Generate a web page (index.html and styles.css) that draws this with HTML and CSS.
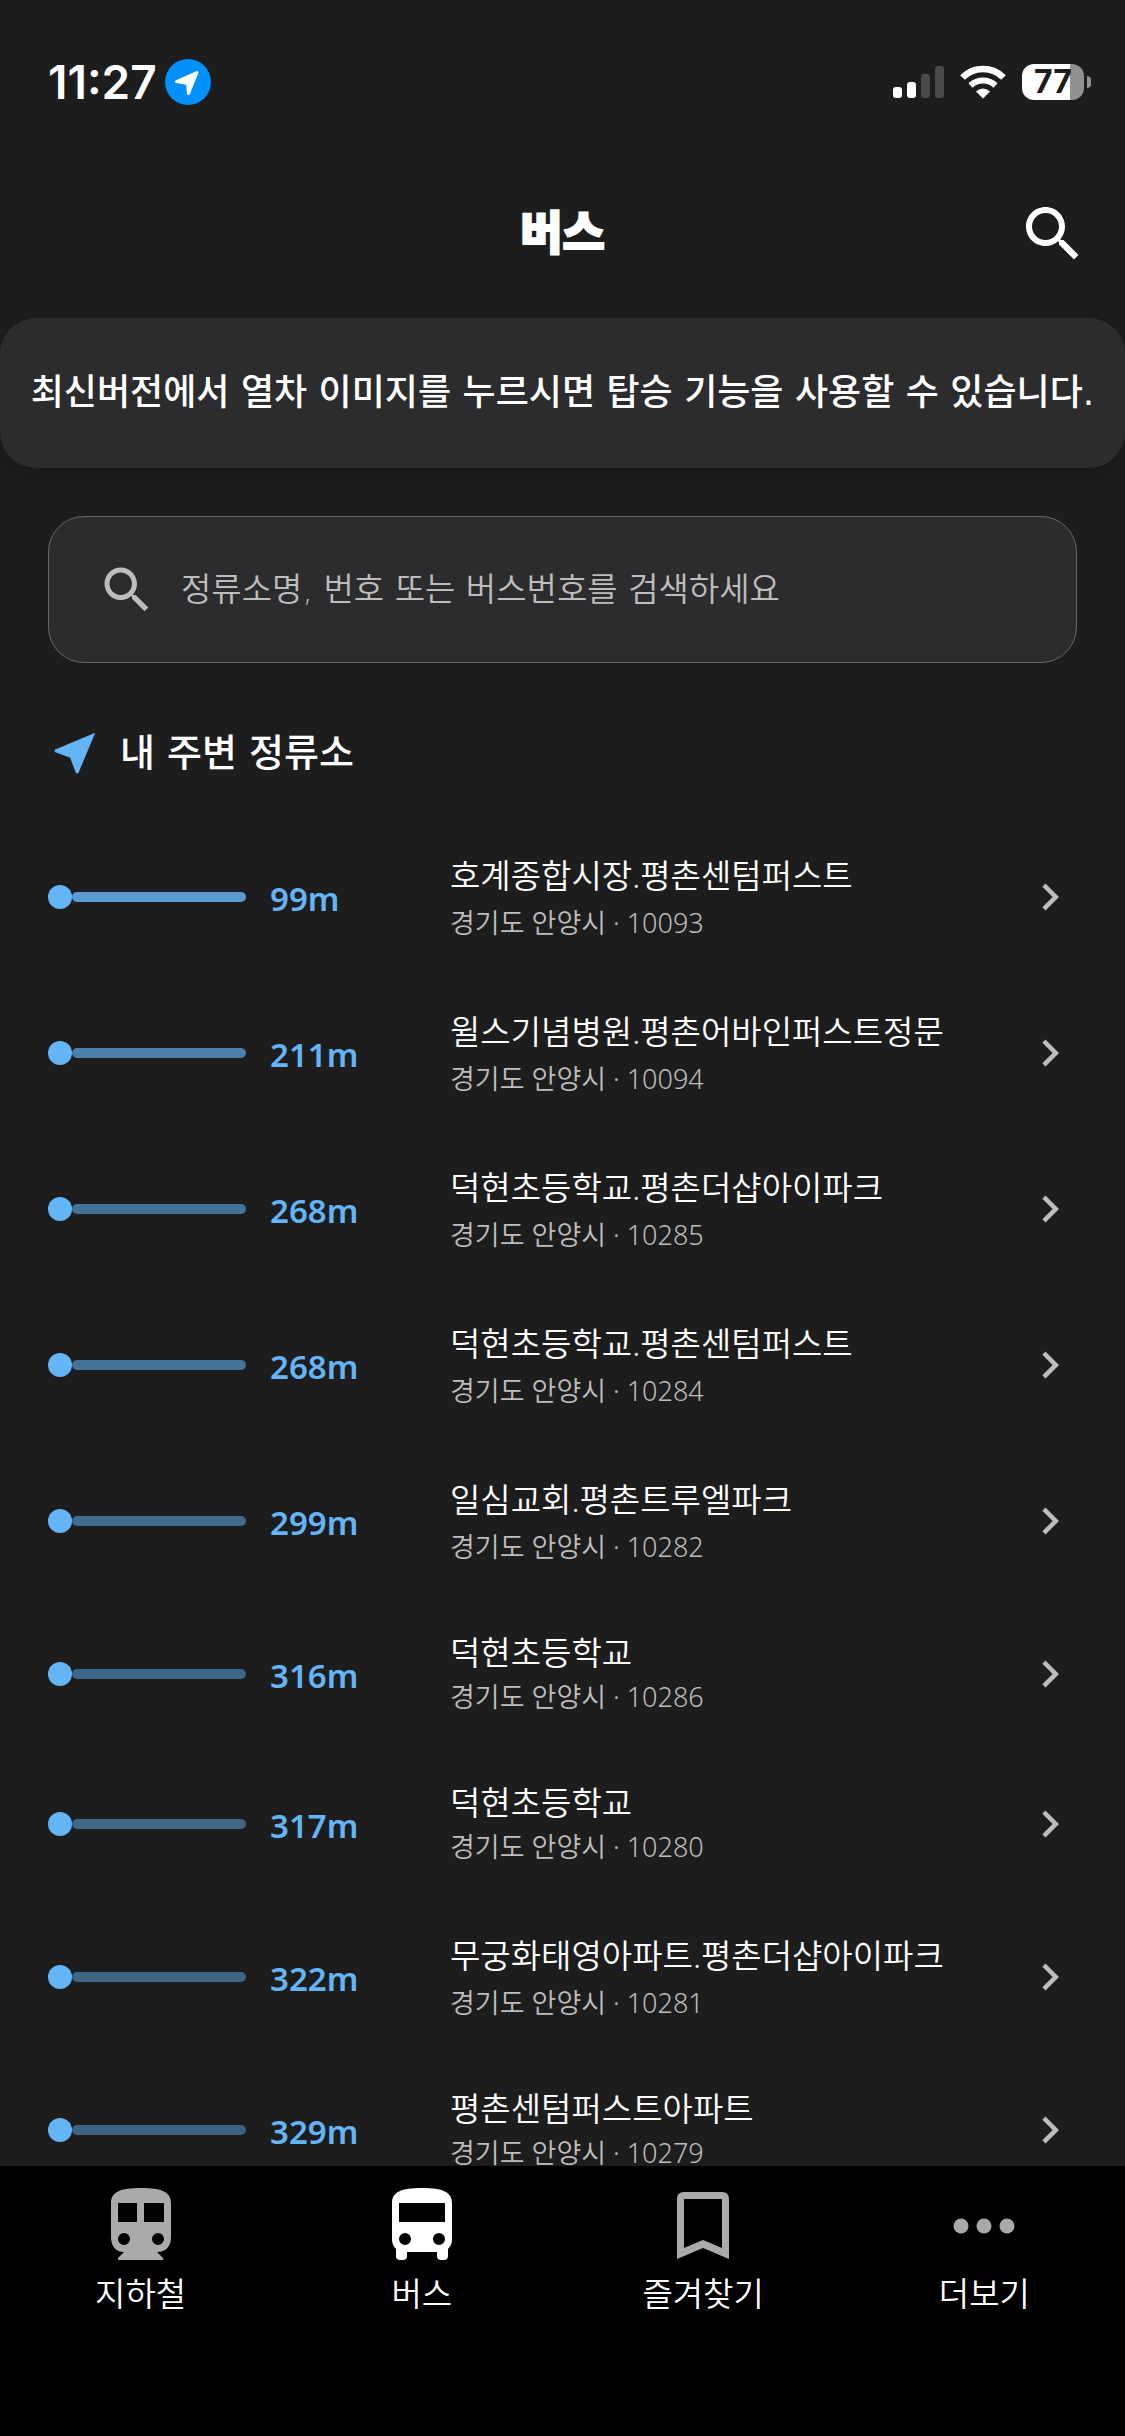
FILE: index.html
```html
<!DOCTYPE html>
<html lang="ko">
<head>
    <meta charset="UTF-8">
    <meta name="viewport" content="width=device-width, initial-scale=1.0">
    <title>버스</title>
    <link rel="stylesheet" href="styles.css">
</head>
<body>
    <!-- Status bar -->
    <div class="status-bar">
        <div class="status-left">
            <span class="clock">11:27</span>
            <svg class="location" viewBox="0 0 46 46">
                <circle cx="23" cy="23" r="23" fill="#0091ff"/>
                <path d="M11.500 22.500L32 13.500L23.500 34.500L22.500 24.500Z" fill="#fff" stroke="#fff" stroke-width="3" stroke-linejoin="round"/>
            </svg>
        </div>
        <div class="status-right">
            <svg class="signal" viewBox="0 0 51 32">
                <rect x="0" y="21" width="9" height="11" rx="3" fill="#fff"/>
                <rect x="14" y="16" width="9" height="16" rx="3" fill="#fff"/>
                <rect x="28" y="8" width="9" height="24" rx="3" fill="#4a4a4b"/>
                <rect x="42" y="0" width="9" height="32" rx="3" fill="#4a4a4b"/>
            </svg>
            <svg class="wifi" viewBox="0 0 46 34">
                <path d="M2.500 12.500A29 29 0 0 1 43.500 12.500" fill="none" stroke="#fff" stroke-width="6.500"/>
                <path d="M10.500 20.500A18 18 0 0 1 35.500 20.500" fill="none" stroke="#fff" stroke-width="6"/>
                <path d="M16 26.500Q23 20.500 30 26.500L23 33.500Z" fill="#fff"/>
            </svg>
            <div class="battery"><span class="battery-level">77</span></div>
            <div class="battery-cap"></div>
        </div>
    </div>

    <!-- Title bar -->
    <header class="app-bar">
        <h1>버스</h1>
        <button class="icon-btn" type="button" aria-label="검색">
            <svg viewBox="0 0 24 24"><path d="M15.500 14h-.79l-.28-.27C15.410 12.590 16 11.110 16 9.500 16 5.910 13.090 3 9.500 3S3 5.910 3 9.500 5.910 16 9.500 16c1.610 0 3.090-.59 4.230-1.570l.27.28v.79l5 4.990L20.490 19l-4.990-5zm-6 0C7.010 14 5 11.990 5 9.500S7.010 5 9.500 5 14 7.010 14 9.500 11.990 14 9.500 14z"/></svg>
        </button>
    </header>

    <div class="notice">최신버전에서 열차 이미지를 누르시면 탑승 기능을 사용할 수 있습니다.</div>

    <main>
        <label class="search">
            <svg viewBox="0 0 24 24"><path d="M15.500 14h-.79l-.28-.27C15.410 12.590 16 11.110 16 9.500 16 5.910 13.090 3 9.500 3S3 5.910 3 9.500 5.910 16 9.500 16c1.610 0 3.090-.59 4.230-1.570l.27.28v.79l5 4.990L20.490 19l-4.990-5zm-6 0C7.010 14 5 11.990 5 9.500S7.010 5 9.500 5 14 7.010 14 9.500 11.990 14 9.500 14z"/></svg>
            <input type="text" placeholder="정류소명, 번호 또는 버스번호를 검색하세요" aria-label="정류소 검색">
        </label>

        <h2>
            <svg viewBox="0 0 24 24"><path d="M21 3L3 10.530v.98l6.840 2.650L12.480 21h.98L21 3z"/></svg>
            내 주변 정류소
        </h2>

        <!-- Nearby stops -->
        <ul class="stops">
            <li><a class="stop" href="#10093">
                <span class="line" style="opacity: 0.83"></span>
                <span class="distance">99m</span>
                <span class="info"><span class="name split">호계종합시장.평촌센텀퍼스트</span><span class="area">경기도 안양시 · 10093</span></span>
                <svg class="chevron" viewBox="0 0 24 24"><path d="M10 6L8.590 7.410 13.170 12l-4.580 4.590L10 18l6-6z"/></svg>
            </a></li>
            <li><a class="stop" href="#10094">
                <span class="line" style="opacity: 0.65"></span>
                <span class="distance">211m</span>
                <span class="info"><span class="name split">윌스기념병원.평촌어바인퍼스트정문</span><span class="area">경기도 안양시 · 10094</span></span>
                <svg class="chevron" viewBox="0 0 24 24"><path d="M10 6L8.590 7.410 13.170 12l-4.580 4.590L10 18l6-6z"/></svg>
            </a></li>
            <li><a class="stop" href="#10285">
                <span class="line" style="opacity: 0.56"></span>
                <span class="distance">268m</span>
                <span class="info"><span class="name split">덕현초등학교.평촌더샵아이파크</span><span class="area">경기도 안양시 · 10285</span></span>
                <svg class="chevron" viewBox="0 0 24 24"><path d="M10 6L8.590 7.410 13.170 12l-4.580 4.590L10 18l6-6z"/></svg>
            </a></li>
            <li><a class="stop" href="#10284">
                <span class="line" style="opacity: 0.56"></span>
                <span class="distance">268m</span>
                <span class="info"><span class="name split">덕현초등학교.평촌센텀퍼스트</span><span class="area">경기도 안양시 · 10284</span></span>
                <svg class="chevron" viewBox="0 0 24 24"><path d="M10 6L8.590 7.410 13.170 12l-4.580 4.590L10 18l6-6z"/></svg>
            </a></li>
            <li><a class="stop" href="#10282">
                <span class="line" style="opacity: 0.51"></span>
                <span class="distance">299m</span>
                <span class="info"><span class="name split">일심교회.평촌트루엘파크</span><span class="area">경기도 안양시 · 10282</span></span>
                <svg class="chevron" viewBox="0 0 24 24"><path d="M10 6L8.590 7.410 13.170 12l-4.580 4.590L10 18l6-6z"/></svg>
            </a></li>
            <li><a class="stop" href="#10286">
                <span class="line" style="opacity: 0.48"></span>
                <span class="distance">316m</span>
                <span class="info"><span class="name">덕현초등학교</span><span class="area">경기도 안양시 · 10286</span></span>
                <svg class="chevron" viewBox="0 0 24 24"><path d="M10 6L8.590 7.410 13.170 12l-4.580 4.590L10 18l6-6z"/></svg>
            </a></li>
            <li><a class="stop" href="#10280">
                <span class="line" style="opacity: 0.48"></span>
                <span class="distance">317m</span>
                <span class="info"><span class="name">덕현초등학교</span><span class="area">경기도 안양시 · 10280</span></span>
                <svg class="chevron" viewBox="0 0 24 24"><path d="M10 6L8.590 7.410 13.170 12l-4.580 4.590L10 18l6-6z"/></svg>
            </a></li>
            <li><a class="stop" href="#10281">
                <span class="line" style="opacity: 0.47"></span>
                <span class="distance">322m</span>
                <span class="info"><span class="name split">무궁화태영아파트.평촌더샵아이파크</span><span class="area">경기도 안양시 · 10281</span></span>
                <svg class="chevron" viewBox="0 0 24 24"><path d="M10 6L8.590 7.410 13.170 12l-4.580 4.590L10 18l6-6z"/></svg>
            </a></li>
            <li><a class="stop" href="#10279">
                <span class="line" style="opacity: 0.46"></span>
                <span class="distance">329m</span>
                <span class="info"><span class="name">평촌센텀퍼스트아파트</span><span class="area">경기도 안양시 · 10279</span></span>
                <svg class="chevron" viewBox="0 0 24 24"><path d="M10 6L8.590 7.410 13.170 12l-4.580 4.590L10 18l6-6z"/></svg>
            </a></li>
        </ul>
    </main>

    <!-- Bottom tabs -->
    <nav class="tabs">
        <a class="tab" href="#subway">
            <svg viewBox="0 0 72 72"><path fill-rule="evenodd" d="M36 0C15 0 6 4 6 15V49C6 58 11 64 19 64L13 70V72H58V70L52 64C61 64 66 58 66 49V15C66 4 57 0 36 0ZM13 15H32V34H13ZM39 15H59V34H39ZM19 45A6 6 0 1 0 19 57A6 6 0 1 0 19 45ZM53 45A6 6 0 1 0 53 57A6 6 0 1 0 53 45Z"/></svg>
            지하철
        </a>
        <a class="tab active" href="#bus">
            <svg viewBox="0 0 72 72"><path fill-rule="evenodd" d="M36 0C15 0 6 4 6 15V52C6 56 8 59 10 61V68Q10 72 14 72H17Q21 72 21 68V64H51V68Q51 72 55 72H58Q62 72 62 68V61C64 59 66 56 66 52V15C66 4 57 0 36 0ZM13 15H59V34H13ZM19 45A6 6 0 1 0 19 57A6 6 0 1 0 19 45ZM53 45A6 6 0 1 0 53 57A6 6 0 1 0 53 45Z"/></svg>
            버스
        </a>
        <a class="tab" href="#favorites">
            <svg viewBox="0 0 72 72"><path fill-rule="evenodd" d="M17 4H55Q62 4 62 11V71L36 60L10 71V11Q10 4 17 4ZM17 11V60L36 52L55 60V11Z"/></svg>
            즐겨찾기
        </a>
        <a class="tab" href="#more">
            <svg viewBox="0 0 72 72"><circle cx="13" cy="38" r="7.500"/><circle cx="36" cy="38" r="7.500"/><circle cx="59" cy="38" r="7.500"/></svg>
            더보기
        </a>
    </nav>
</body>
</html>
```

FILE: styles.css
```css
* {
    box-sizing: border-box;
}
body {
    margin: 0;
    height: 100vh;
    display: flex;
    flex-direction: column;
    overflow: hidden;
    background: #1d1d1e;
    color: #fff;
    font-family: "Noto Sans", "Noto Sans CJK KR", sans-serif;
}
svg {
    display: block;
    flex-shrink: 0;
    fill: currentColor;
}
a {
    color: inherit;
    text-decoration: none;
}
.status-bar {
    display: flex;
    justify-content: space-between;
    align-items: center;
    height: 164px;
    padding: 0 34px 0 48px;
    font-family: Inter, sans-serif;
    flex-shrink: 0;
}
.status-left, .status-right {
    display: flex;
    align-items: center;
}
.status-left {
    gap: 8px;
}
.clock {
    font-size: 46px;
    font-weight: 600;
}
.location {
    width: 46px;
    height: 46px;
}
.signal {
    width: 51px;
    height: 32px;
}
.wifi {
    width: 46px;
    height: 34px;
    margin: 0 16px;
}
.battery {
    width: 62px;
    height: 36px;
    border-radius: 12px;
    background: linear-gradient(to right, #fff 77%, #929293 77%);
    color: #1d1d1e;
    text-align: center;
}
.battery-level {
    font-size: 32px;
    font-weight: 700;
    line-height: 36px;
}
.battery-cap {
    width: 4px;
    height: 12px;
    margin-left: 3px;
    border-radius: 0 4px 4px 0;
    background: #929293;
}
.app-bar {
    display: grid;
    grid-template-columns: 72px 1fr 72px;
    align-items: center;
    height: 154px;
    padding: 0 36px 14px;
    flex-shrink: 0;
}
.app-bar h1 {
    grid-column: 2;
    margin: 0;
    padding-bottom: 6px;
    font-size: 46px;
    font-weight: 900;
    line-height: 66px;
    text-align: center;
    -webkit-text-stroke: 2px #fff;
}
.icon-btn {
    width: 72px;
    height: 72px;
    padding: 0;
    border: none;
    background: none;
    color: #fff;
    cursor: pointer;
}
.notice {
    flex-shrink: 0;
    padding: 48px 24px;
    border-radius: 36px;
    background: #2c2c2e;
    box-shadow: 0 6px 24px rgba(0, 0, 0, 0.15);
    font-size: 36px;
    font-weight: 500;
    line-height: 54px;
    text-align: center;
    white-space: nowrap;
}
.notice, .search, h2 {
    font-family: "DejaVu Sans", "Noto Sans CJK KR", sans-serif;
}
main {
    flex: 1;
    min-height: 0;
    padding: 48px 48px 0;
    overflow: hidden;
}
.search {
    display: flex;
    align-items: center;
    gap: 24px;
    height: 147px;
    padding: 0 48px;
    border: 1px solid #68686a;
    border-radius: 36px;
    background: #2c2c2e;
    color: #bdbdbd;
}
.search svg {
    width: 60px;
    height: 60px;
}
.search input {
    flex: 1;
    min-width: 0;
    padding: 0;
    border: none;
    outline: none;
    background: none;
    color: #fff;
    font-family: inherit;
    font-size: 33px;
    font-weight: 350;
}
.search input::placeholder {
    color: #bdbdbd;
    opacity: 1;
}
h2 {
    display: flex;
    align-items: center;
    gap: 18px;
    margin: 63px 0 39px;
    font-size: 38px;
    font-weight: 500;
    line-height: 54px;
}
h2 svg {
    width: 54px;
    height: 54px;
    color: #64b5f6;
}
.stops {
    margin: 0;
    padding: 0;
    list-style: none;
}
.stop {
    display: grid;
    grid-template-columns: 24px 174px 204px 1fr 54px;
    align-items: center;
    padding: 27px 0;
}
.stop::before {
    content: "";
    width: 24px;
    height: 24px;
    border-radius: 50%;
    background: #64b5f6;
}
.line {
    height: 10px;
    border-radius: 5px;
    background: #64b5f6;
}
.distance {
    padding: 2px 0 0 24px;
    color: #64b5f6;
    font-size: 33px;
    font-weight: 600;
}
.info {
    padding-bottom: 8px;
    font-weight: 350;
}
.name, .area {
    display: block;
    white-space: nowrap;
}
.name {
    font-size: 33px;
    line-height: 54px;
}
.name.split {
    line-height: 60px;
}
.area {
    color: #bdbdbd;
    font-size: 27px;
    line-height: 34px;
}
.chevron {
    width: 54px;
    height: 54px;
    color: #bdbdbd;
}
.tabs {
    display: grid;
    grid-template-columns: repeat(4, 1fr);
    flex-shrink: 0;
    height: 270px;
    padding-top: 22px;
    background: #000;
}
.tab {
    display: flex;
    flex-direction: column;
    align-items: center;
    gap: 10px;
    font-size: 33px;
    font-weight: 350;
    line-height: 48px;
}
.tab svg {
    width: 72px;
    height: 72px;
    color: #aaa;
}
.tab.active svg {
    color: #fff;
}
```
